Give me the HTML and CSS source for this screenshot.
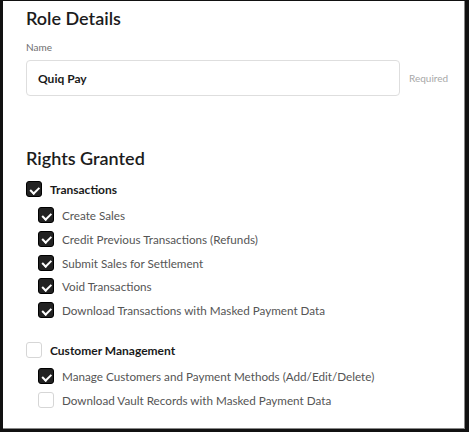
FILE: index.html
```html
<!DOCTYPE html>
<html>
<head>
<meta charset="utf-8">
<link rel="stylesheet" href="styles.css">
</head>
<body>
<div class="frame">
  <div class="panel">
    <h2 class="title">Role Details</h2>
    <div class="label">Name</div>
    <div class="field-row">
      <div class="input">Quiq Pay</div>
      <span class="required">Required</span>
    </div>

    <h2 class="title rights">Rights Granted</h2>

    <div class="group">
      <div class="row parent"><span class="cb on"></span><span class="ptext">Transactions</span></div>
      <div class="children">
        <div class="row"><span class="cb on"></span><span class="ctext">Create Sales</span></div>
        <div class="row"><span class="cb on"></span><span class="ctext">Credit Previous Transactions (Refunds)</span></div>
        <div class="row"><span class="cb on"></span><span class="ctext">Submit Sales for Settlement</span></div>
        <div class="row"><span class="cb on"></span><span class="ctext">Void Transactions</span></div>
        <div class="row"><span class="cb on"></span><span class="ctext">Download Transactions with Masked Payment Data</span></div>
      </div>
    </div>

    <div class="group group2">
      <div class="row parent"><span class="cb"></span><span class="ptext">Customer Management</span></div>
      <div class="children">
        <div class="row"><span class="cb on"></span><span class="ctext">Manage Customers and Payment Methods (Add/Edit/Delete)</span></div>
        <div class="row"><span class="cb"></span><span class="ctext">Download Vault Records with Masked Payment Data</span></div>
      </div>
    </div>
  </div>
</div>
</body>
</html>
```

FILE: styles.css
```css
html, body {
  margin: 0;
  padding: 0;
  background: #000;
}
.frame {
  width: 469px;
  height: 432px;
  padding: 1px 3px 3px 3px;
  box-sizing: border-box;
  background: #111;
}
.panel {
  width: 462px;
  height: 428px;
  background: #fff;
  box-sizing: border-box;
  padding: 5px 0 0 23px;
  font-family: Lato, "Open Sans", sans-serif;
  color: #1f1f1f;
  border-right: 1px solid #888;
  border-bottom: 1px solid #888;
}
.title {
  margin: 0;
  font-size: 18px;
  font-weight: 600;
  line-height: 24px;
  color: #1c1c1c;
}
.label {
  margin-top: 11px;
  font-size: 10px;
  line-height: 12px;
  color: #6e6e6e;
}
.field-row {
  display: flex;
  align-items: center;
  margin-top: 7px;
}
.input {
  width: 374px;
  height: 36px;
  box-sizing: border-box;
  border: 1px solid #dedede;
  border-radius: 4px;
  padding: 0 11px;
  display: flex;
  align-items: center;
  font-size: 12px;
  font-weight: 700;
  color: #1a1a1a;
}
.required {
  margin-left: 9px;
  font-size: 10px;
  color: #a8a8a8;
}
.rights {
  margin-top: 50px;
}
.group {
  margin-top: 11px;
}
.group2 {
  margin-top: 24px;
}
.row {
  display: flex;
  align-items: center;
  height: 16px;
}
.children {
  padding-left: 12px;
  margin-top: 10px;
  display: flex;
  flex-direction: column;
  gap: 7.8px;
}
.cb {
  width: 16px;
  height: 16px;
  box-sizing: border-box;
  border-radius: 3px;
  border: 1px solid #d6d6d6;
  background: #fff;
  flex: none;
  position: relative;
}
.cb.on {
  background: #222;
  border: 1px solid #000;
}
.cb.on::after {
  content: "";
  position: absolute;
  left: 4.5px;
  top: 2.5px;
  width: 3.5px;
  height: 6.5px;
  border-right: 2px solid #fff;
  border-bottom: 2px solid #fff;
  transform: rotate(45deg);
}
.ptext {
  margin-left: 8px;
  font-size: 12px;
  font-weight: 700;
  color: #1a1a1a;
}
.ctext {
  margin-left: 8px;
  font-size: 11.7px;
  font-weight: 400;
  color: #555;
}
```
